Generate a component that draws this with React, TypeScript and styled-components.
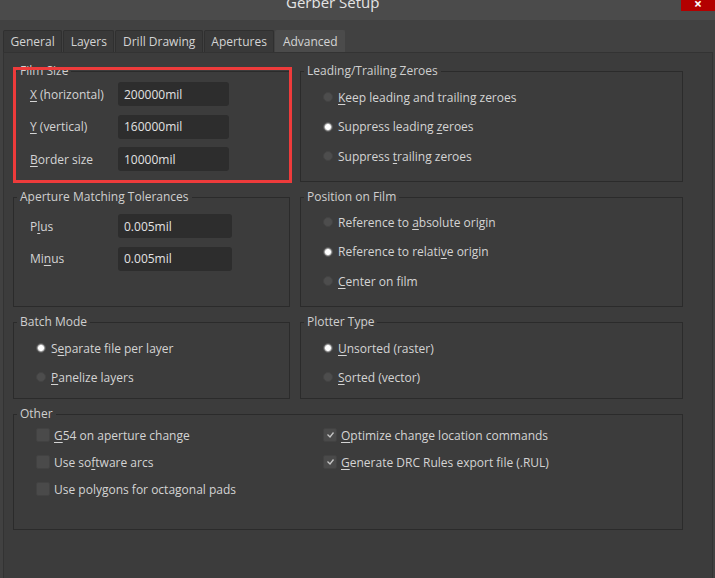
import React from "react";
import styled, { createGlobalStyle } from "styled-components";

const Global = createGlobalStyle`
  html, body { margin: 0; padding: 0; background: #3c3c3c; }
  body { font-family: "Open Sans", "Noto Sans", sans-serif; }
`;

const Window = styled.div`
  position: relative;
  width: 715px;
  height: 578px;
  overflow: hidden;
  background: #414141;
  color: #d6d6d6;
  font-size: 12px;
  display: flex;
  flex-direction: column;
`;

const TitleBar = styled.div`
  height: 20px;
  flex: none;
  background: #4b4b4b;
  display: flex;
  align-items: flex-start;
  justify-content: space-between;
  overflow: hidden;
`;

const Title = styled.div`
  margin: -8px 0 0 286px;
  font-size: 15px;
  line-height: 20px;
  color: #e4e4e4;
`;

const CloseButton = styled.div`
  width: 34px;
  height: 11px;
  background: #b30000;
  color: #ffffff;
  font-size: 14px;
  font-weight: bold;
  line-height: 8px;
  text-align: center;
  overflow: hidden;
`;

const TabStrip = styled.div`
  display: flex;
  gap: 1px;
  padding: 10px 0 0 3px;
  height: 22px;
  flex: none;
`;

const Tab = styled.div<{ $active?: boolean }>`
  height: 22px;
  box-sizing: border-box;
  padding: 0 6.5px;
  display: flex;
  align-items: center;
  background: ${(p) => (p.$active ? "#4b4b4b" : "#393939")};
  border: 1px solid ${(p) => (p.$active ? "#4b4b4b" : "#303030")};
  border-bottom: none;
  border-radius: 2px 2px 0 0;
  color: #d4d4d4;
  font-size: 12px;
`;

const Panel = styled.div`
  margin-left: 3px;
  width: 710px;
  flex: 1;
  box-sizing: border-box;
  background: #3c3c3c;
  border-top: 1px solid #333333;
  border-left: 1px solid #333333;
  border-right: 1px solid #333333;
  padding: 11px 0 0 9px;
`;

const Grid = styled.div`
  display: grid;
  grid-template-columns: 277px 383px;
  grid-template-rows: 118px 117px 84px 123px;
  column-gap: 10px;
  row-gap: 8px;
`;

const Group = styled.fieldset<{ $span?: boolean }>`
  margin: 0;
  padding: 0 0 0 22px;
  min-width: 0;
  box-sizing: border-box;
  border: 1px solid #2b2b2b;
  ${(p) => (p.$span ? "grid-column: 1 / span 2;" : "")}
`;

const Legend = styled.legend`
  margin-left: -19px;
  padding: 0 3px;
  font-size: 12px;
  line-height: 14px;
  color: #cfcfcf;
`;

const FieldList = styled.div<{ $top: number }>`
  display: grid;
  grid-template-columns: 88px auto;
  row-gap: 8.5px;
  padding-top: ${(p) => p.$top}px;
  margin-left: -6px;
  align-items: center;
`;

const FieldLabel = styled.div`
  color: #d4d4d4;
`;

const Input = styled.div<{ $w: number }>`
  width: ${(p) => p.$w}px;
  height: 24px;
  box-sizing: border-box;
  background: #2d2d2d;
  border-radius: 3px;
  padding: 0 6px;
  display: flex;
  align-items: center;
  color: #e2e2e2;
`;

const OptionList = styled.div<{ $top: number; $gap: number }>`
  display: flex;
  flex-direction: column;
  padding-top: ${(p) => p.$top}px;
  gap: ${(p) => p.$gap}px;
`;

const OptionRow = styled.div`
  height: 20px;
  display: flex;
  align-items: center;
  gap: 5px;
  color: #d4d4d4;
  white-space: nowrap;
`;

const RadioDot = styled.span<{ $on?: boolean }>`
  width: 10px;
  height: 10px;
  flex: none;
  border-radius: 50%;
  box-sizing: border-box;
  background: ${(p) =>
    p.$on
      ? "radial-gradient(circle, #ffffff 0 2.5px, #cfcfcf 3px, #5a5a5a 4.5px)"
      : "#4d4d4d"};
  border: 1px solid ${(p) => (p.$on ? "#5a5a5a" : "#444444")};
`;

const CheckBox = styled.span`
  width: 14px;
  height: 14px;
  flex: none;
  box-sizing: border-box;
  border-radius: 2px;
  background: #4a4a4a;
  border: 1px solid #424242;
  margin-right: -1px;
  display: flex;
  align-items: flex-start;
  justify-content: center;
`;

const CheckColumns = styled.div`
  display: grid;
  grid-template-columns: 287px 1fr;
  padding-top: 4px;
`;

const Annotation = styled.div`
  position: absolute;
  left: 13px;
  top: 67px;
  width: 279px;
  height: 116px;
  box-sizing: border-box;
  border: 3px solid #ee3b3b;
  pointer-events: none;
`;

const U = styled.span`
  text-decoration: underline;
  text-underline-offset: 2px;
`;

const Label = ({ text, u }: { text: string; u?: number }) => {
  if (u === undefined) return <span>{text}</span>;
  return (
    <span>
      {text.slice(0, u)}
      <U>{text[u]}</U>
      {text.slice(u + 1)}
    </span>
  );
};

type Opt = { text: string; u?: number; on?: boolean };

const Radios = ({ items, top, gap }: { items: Opt[]; top: number; gap: number }) => (
  <OptionList $top={top} $gap={gap}>
    {items.map((o) => (
      <OptionRow key={o.text}>
        <RadioDot $on={o.on} />
        <Label text={o.text} u={o.u} />
      </OptionRow>
    ))}
  </OptionList>
);

const Tick = () => (
  <svg width="9" height="8" viewBox="0 0 9 8" style={{ marginTop: 2 }}>
    <path d="M1.5 3.5 L4 6 L7.5 1.5" stroke="#c4c4c4" strokeWidth="1.3" fill="none" />
  </svg>
);

const Checks = ({ items }: { items: Opt[] }) => (
  <OptionList $top={0} $gap={7}>
    {items.map((o) => (
      <OptionRow key={o.text}>
        <CheckBox>{o.on ? <Tick /> : null}</CheckBox>
        <Label text={o.text} u={o.u} />
      </OptionRow>
    ))}
  </OptionList>
);

const tabs = ["General", "Layers", "Drill Drawing", "Apertures", "Advanced"];

export default function App() {
  return (
    <>
      <Global />
      <Window>
        <TitleBar>
          <Title>Gerber Setup</Title>
          <CloseButton>×</CloseButton>
        </TitleBar>
        <TabStrip>
          {tabs.map((t) => (
            <Tab key={t} $active={t === "Advanced"}>
              {t}
            </Tab>
          ))}
        </TabStrip>
        <Panel>
          <Grid>
            <Group>
              <Legend>Film Size</Legend>
              <FieldList $top={4}>
                <FieldLabel><Label text="X (horizontal)" u={0} /></FieldLabel>
                <Input $w={111}>200000mil</Input>
                <FieldLabel><Label text="Y (vertical)" u={0} /></FieldLabel>
                <Input $w={111}>160000mil</Input>
                <FieldLabel><Label text="Border size" u={0} /></FieldLabel>
                <Input $w={111}>10000mil</Input>
              </FieldList>
            </Group>
            <Group>
              <Legend>Leading/Trailing Zeroes</Legend>
              <Radios
                top={9}
                gap={9.5}
                items={[
                  { text: "Keep leading and trailing zeroes", u: 0 },
                  { text: "Suppress leading zeroes", u: 17, on: true },
                  { text: "Suppress trailing zeroes", u: 9 },
                ]}
              />
            </Group>
            <Group>
              <Legend>Aperture Matching Tolerances</Legend>
              <FieldList $top={10}>
                <FieldLabel><Label text="Plus" u={1} /></FieldLabel>
                <Input $w={114}>0.005mil</Input>
                <FieldLabel><Label text="Minus" u={2} /></FieldLabel>
                <Input $w={114}>0.005mil</Input>
              </FieldList>
            </Group>
            <Group>
              <Legend>Position on Film</Legend>
              <Radios
                top={8}
                gap={9.5}
                items={[
                  { text: "Reference to absolute origin", u: 13 },
                  { text: "Reference to relative origin", u: 19, on: true },
                  { text: "Center on film", u: 0 },
                ]}
              />
            </Group>
            <Group>
              <Legend>Batch Mode</Legend>
              <Radios
                top={9}
                gap={9}
                items={[
                  { text: "Separate file per layer", u: 1, on: true },
                  { text: "Panelize layers", u: 0 },
                ]}
              />
            </Group>
            <Group>
              <Legend>Plotter Type</Legend>
              <Radios
                top={9}
                gap={9}
                items={[
                  { text: "Unsorted (raster)", u: 0, on: true },
                  { text: "Sorted (vector)", u: 0 },
                ]}
              />
            </Group>
            <Group $span>
              <Legend>Other</Legend>
              <CheckColumns>
                <Checks
                  items={[
                    { text: "G54 on aperture change", u: 0 },
                    { text: "Use software arcs", u: 6 },
                    { text: "Use polygons for octagonal pads" },
                  ]}
                />
                <Checks
                  items={[
                    { text: "Optimize change location commands", u: 0, on: true },
                    { text: "Generate DRC Rules export file (.RUL)", u: 0, on: true },
                  ]}
                />
              </CheckColumns>
            </Group>
          </Grid>
        </Panel>
        <Annotation />
      </Window>
    </>
  );
}
